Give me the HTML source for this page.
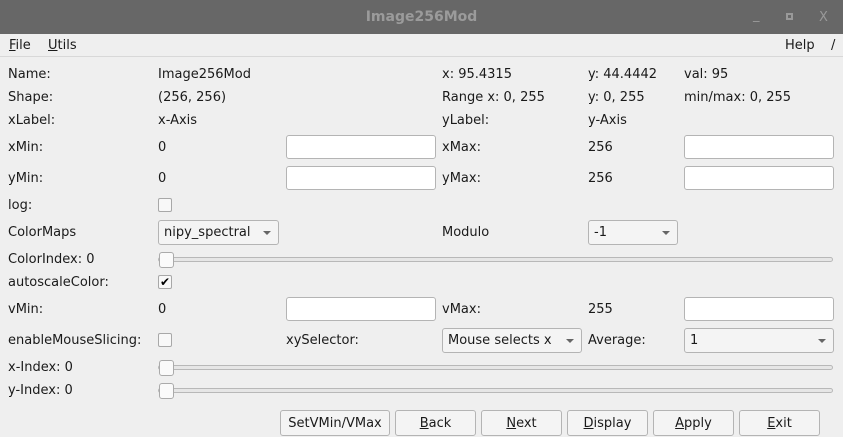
<!DOCTYPE html>
<html><head><style>
*{box-sizing:border-box;margin:0;padding:0}
body{width:843px;height:437px;background:#efefef;font-family:"DejaVu Sans","Liberation Sans",sans-serif;font-size:13px;color:#1a1a1a;position:relative;overflow:hidden}
.t{position:absolute;white-space:nowrap;line-height:16px;margin-top:1px}
.in{position:absolute;background:#fff;border:1px solid #b4b4b4;border-radius:3px;height:24px}
.cb{position:absolute;background:#f8f8f8;border:1px solid #a8a8a8;border-radius:2px;width:14px;height:14px;font-size:12px;line-height:12px;text-align:center;font-weight:bold;color:#000}
.co{position:absolute;background:#f4f4f4;border:1px solid #b4b4b4;border-radius:3px;height:25px;padding:0 0 0 5px;line-height:24px}
.co:after{content:"";position:absolute;right:7px;top:10px;border-left:4px solid transparent;border-right:4px solid transparent;border-top:4px solid #666}
.sl{position:absolute;left:158px;width:675px;height:5px;border:1px solid #b8b8b8;border-radius:3px;background:#e6e6e6}
.sl:before{content:"";position:absolute;left:0;top:-6px;width:13px;height:14px;border:1px solid #aaa;border-radius:3px;background:#fafafa}
.bt{position:absolute;top:410px;height:26px;border:1px solid #b4b4b4;border-radius:3px;background:#f4f4f4;text-align:center;line-height:26px}
u{text-decoration:underline}
</style></head><body>
<div style="position:absolute;left:0;top:0;width:843px;height:34px;background:#676767"></div>
<div class="t" style="left:0;width:843px;top:8px;text-align:center;color:#9b9b9b;font-weight:bold;font-size:14px">Image256Mod</div>
<div class="t" style="left:753px;top:7px;color:#999;font-size:13px">_</div>
<div style="position:absolute;left:786px;top:13px;width:7px;height:7px;border:2px solid #999"></div>
<div class="t" style="left:819px;top:9px;color:#999;font-size:13px">X</div>
<div style="position:absolute;left:0;top:56px;width:843px;height:1px;background:#d8d8d8"></div>
<div class="t" style="left:9px;top:37px"><u>F</u>ile</div>
<div class="t" style="left:48px;top:37px"><u>U</u>tils</div>
<div class="t" style="left:785px;top:37px">Help</div>
<div class="t" style="left:831px;top:37px">/</div>

<div class="t" style="left:8px;top:66px">Name:</div>
<div class="t" style="left:158px;top:66px">Image256Mod</div>
<div class="t" style="left:442px;top:66px">x: 95.4315</div>
<div class="t" style="left:588px;top:66px">y: 44.4442</div>
<div class="t" style="left:684px;top:66px">val: 95</div>

<div class="t" style="left:8px;top:89px">Shape:</div>
<div class="t" style="left:158px;top:89px">(256, 256)</div>
<div class="t" style="left:442px;top:89px">Range x: 0, 255</div>
<div class="t" style="left:588px;top:89px">y: 0, 255</div>
<div class="t" style="left:684px;top:89px">min/max: 0, 255</div>

<div class="t" style="left:8px;top:112px">xLabel:</div>
<div class="t" style="left:158px;top:112px">x-Axis</div>
<div class="t" style="left:442px;top:112px">yLabel:</div>
<div class="t" style="left:588px;top:112px">y-Axis</div>

<div class="t" style="left:8px;top:139px">xMin:</div>
<div class="t" style="left:158px;top:139px">0</div>
<div class="in" style="left:286px;top:135px;width:150px"></div>
<div class="t" style="left:442px;top:139px">xMax:</div>
<div class="t" style="left:588px;top:139px">256</div>
<div class="in" style="left:684px;top:135px;width:150px"></div>

<div class="t" style="left:8px;top:170px">yMin:</div>
<div class="t" style="left:158px;top:170px">0</div>
<div class="in" style="left:286px;top:166px;width:150px"></div>
<div class="t" style="left:442px;top:170px">yMax:</div>
<div class="t" style="left:588px;top:170px">256</div>
<div class="in" style="left:684px;top:166px;width:150px"></div>

<div class="t" style="left:8px;top:197px">log:</div>
<div class="cb" style="left:158px;top:198px"></div>

<div class="t" style="left:8px;top:224px">ColorMaps</div>
<div class="co" style="left:158px;top:220px;width:121px">nipy_spectral</div>
<div class="t" style="left:442px;top:224px">Modulo</div>
<div class="co" style="left:588px;top:220px;width:90px">-1</div>

<div class="t" style="left:8px;top:251px">ColorIndex: 0</div>
<div class="sl" style="top:257px"></div>

<div class="t" style="left:8px;top:274px">autoscaleColor:</div>
<div class="cb" style="left:158px;top:275px">✔</div>

<div class="t" style="left:8px;top:301px">vMin:</div>
<div class="t" style="left:158px;top:301px">0</div>
<div class="in" style="left:286px;top:297px;width:150px"></div>
<div class="t" style="left:442px;top:301px">vMax:</div>
<div class="t" style="left:588px;top:301px">255</div>
<div class="in" style="left:684px;top:297px;width:150px"></div>

<div class="t" style="left:8px;top:332px">enableMouseSlicing:</div>
<div class="cb" style="left:158px;top:333px"></div>
<div class="t" style="left:286px;top:332px">xySelector:</div>
<div class="co" style="left:442px;top:328px;width:140px">Mouse selects x</div>
<div class="t" style="left:588px;top:332px">Average:</div>
<div class="co" style="left:684px;top:328px;width:150px">1</div>

<div class="t" style="left:8px;top:359px">x-Index: 0</div>
<div class="sl" style="top:365px"></div>
<div class="t" style="left:8px;top:382px">y-Index: 0</div>
<div class="sl" style="top:388px"></div>

<div class="bt" style="left:280px;width:110px">SetVMin/VMax</div>
<div class="bt" style="left:395px;width:81px"><u>B</u>ack</div>
<div class="bt" style="left:481px;width:81px"><u>N</u>ext</div>
<div class="bt" style="left:567px;width:81px"><u>D</u>isplay</div>
<div class="bt" style="left:653px;width:81px"><u>A</u>pply</div>
<div class="bt" style="left:739px;width:81px"><u>E</u>xit</div>
</body></html>
